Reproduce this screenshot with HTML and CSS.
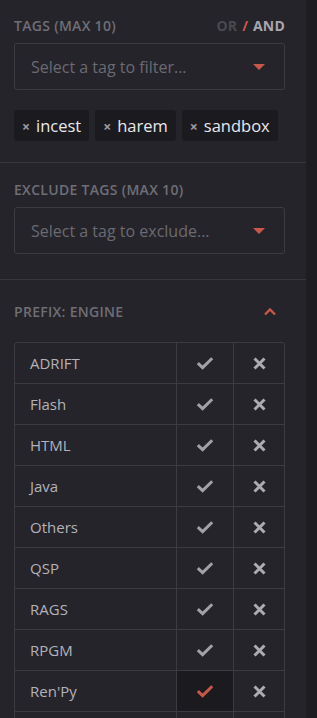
FILE: index.html
```html
<!DOCTYPE html>
<html>

<head>
    <meta charset="UTF-8" />
    <title>Filters</title>
    <link rel="stylesheet" href="styles.css">
</head>

<body>
    <div class="sidebar">
        <div class="panel">
            <div class="section section-tags">
                <div class="section-head">
                    <span class="title">Tags (max 10)</span>
                    <span class="mode"><span class="off">OR</span> <span class="slash">/</span> <span class="on">AND</span></span>
                </div>
                <div class="select">
                    <span class="placeholder">Select a tag to filter...</span>
                    <span class="caret"></span>
                </div>
                <div class="chips">
                    <span class="chip"><span class="chip-x">&times;</span>incest</span>
                    <span class="chip"><span class="chip-x">&times;</span>harem</span>
                    <span class="chip"><span class="chip-x">&times;</span>sandbox</span>
                </div>
            </div>

            <div class="section section-exclude">
                <div class="section-head">
                    <span class="title">Exclude tags (max 10)</span>
                </div>
                <div class="select">
                    <span class="placeholder">Select a tag to exclude...</span>
                    <span class="caret"></span>
                </div>
            </div>

            <div class="section section-prefix">
                <div class="section-head">
                    <span class="title">Prefix: Engine</span>
                    <svg class="chevron" width="14" height="9" viewBox="0 0 14 9">
                        <path d="M2 7.5 L7 2.5 L12 7.5" fill="none" stroke="#c8574a" stroke-width="2.4" />
                    </svg>
                </div>
                <table class="engines" id="engines"></table>
            </div>
        </div>
        <div class="strip"></div>
    </div>

    <script>
        // last row only peeks in at the bottom edge, so it is left blank
        const engines = ['ADRIFT', 'Flash', 'HTML', 'Java', 'Others', 'QSP', 'RAGS', 'RPGM', "Ren'Py", ''];
        const selected = "Ren'Py";
        const checkSvg = '<svg width="18" height="14" viewBox="0 0 18 14"><path d="M1.8 7.2 L6.6 11.6 L16.2 2.2" fill="none" stroke="currentColor" stroke-width="3"/></svg>';
        const crossSvg = '<svg width="13" height="13" viewBox="0 0 13 13"><path d="M1.5 1.5 L11.5 11.5 M11.5 1.5 L1.5 11.5" fill="none" stroke="currentColor" stroke-width="3"/></svg>';

        const table = document.getElementById('engines');
        engines.forEach(name => {
            const row = document.createElement('tr');
            const on = name === selected ? ' active' : '';
            const icons = name ? [checkSvg, crossSvg] : ['', ''];
            row.innerHTML = '<td class="name">' + name + '</td>' +
                '<td class="icon check' + on + '">' + icons[0] + '</td>' +
                '<td class="icon cross">' + icons[1] + '</td>';
            table.appendChild(row);
        });
    </script>
</body>

</html>
```

FILE: styles.css
```css
* {
    box-sizing: border-box;
}

body {
    margin: 0;
    background: #1e1d22;
    font-family: "Open Sans", Arial, sans-serif;
    height: 718px;
    overflow: hidden;
}

.sidebar {
    display: flex;
    height: 100%;
}

.panel {
    width: 306px;
    background: #25242a;
}

.strip {
    flex: 1;
    background: #1e1d22;
}

.section {
    padding: 0 21px 0 14px;
    border-bottom: 1px solid #38373e;
}

.section-tags {
    padding-top: 17px;
    padding-bottom: 21px;
}

.section-exclude {
    padding-top: 18px;
    padding-bottom: 25px;
}

.section-prefix {
    padding-top: 23px;
    border-bottom: none;
}

.section-head {
    display: flex;
    justify-content: space-between;
    align-items: center;
    height: 16px;
    margin-bottom: 10px;
}

.section-prefix .section-head {
    margin-bottom: 23px;
}

.title {
    font-size: 14px;
    font-weight: 600;
    letter-spacing: 0.3px;
    text-transform: uppercase;
    color: #6f6e76;
}

.mode {
    font-size: 14px;
    font-weight: 700;
    letter-spacing: 0.2px;
}

.mode .off {
    color: #4a4950;
}

.mode .slash {
    color: #c8574a;
    margin: 0 1px;
}

.mode .on {
    color: #a8a7ae;
}

.chevron {
    margin-right: 8px;
}

.select {
    height: 47px;
    border: 1px solid #3c3b42;
    border-radius: 3px;
    display: flex;
    align-items: center;
    justify-content: space-between;
    padding: 0 19px 0 16px;
}

.placeholder {
    font-size: 16px;
    color: #6b6a72;
}

.caret {
    width: 0;
    height: 0;
    border-left: 6px solid transparent;
    border-right: 6px solid transparent;
    border-top: 6px solid #c8574a;
}

.chips {
    display: flex;
    gap: 6px;
    margin-top: 20px;
}

.chip {
    display: flex;
    align-items: center;
    height: 31px;
    padding: 0 8px 0 8px;
    background: #1b1a1f;
    border-radius: 3px;
    font-size: 16.5px;
    color: #e8e8ec;
}

.chip-x {
    font-size: 14px;
    font-weight: 700;
    color: #9b9aa1;
    margin-right: 6px;
    padding-top: 1px;
}

.engines {
    width: 100%;
    border-collapse: separate;
    border-spacing: 0;
    border: 1px solid #3c3b42;
    border-radius: 3px;
}

.engines td {
    height: 41px;
    border-top: 1px solid #3c3b42;
    padding: 0;
}

.engines tr:first-child td {
    border-top: none;
    height: 40px;
}

.engines .name {
    padding-left: 15px;
    font-size: 15px;
    color: #b3b2b9;
}

.engines .icon {
    text-align: center;
    border-left: 1px solid #3c3b42;
    color: #a2a1a8;
}

.engines .icon svg {
    display: block;
    margin: 0 auto;
}

.engines .check {
    width: 57px;
}

.engines .cross {
    width: 51px;
    color: #adacb3;
}

.engines .check.active {
    background: #1b1a1f;
    color: #c8574a;
}
```
